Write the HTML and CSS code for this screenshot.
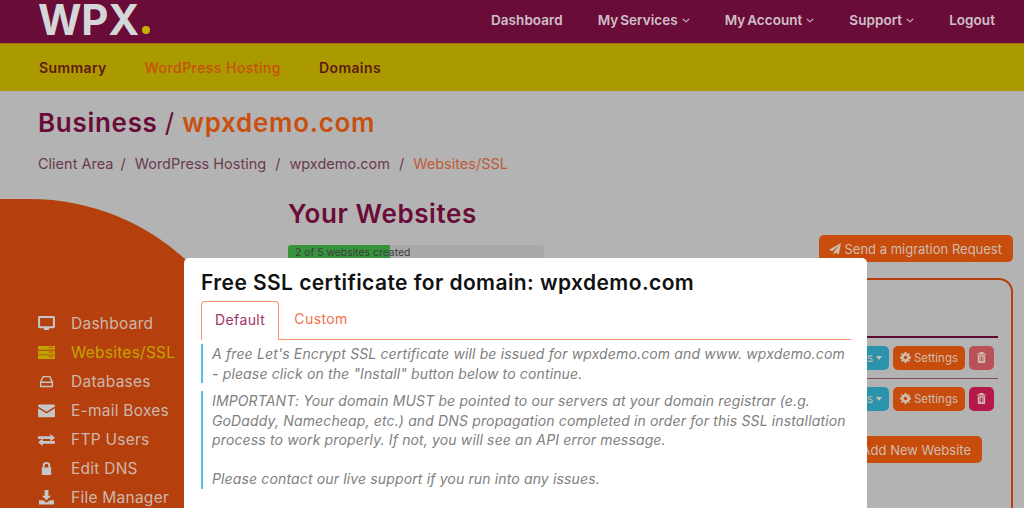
FILE: index.html
```html
<!DOCTYPE html>
<html lang="en">
<head>
    <meta charset="UTF-8">
    <meta name="viewport" content="width=device-width, initial-scale=1.0">
    <title>WPX - Websites/SSL</title>
    <link rel="stylesheet" href="styles.css">
</head>
<body>
<div class="page">
    <header class="topbar">
        <a class="logo" href="#">WPX<span class="logo-dot"></span></a>
        <nav class="topnav">
            <a href="#">Dashboard</a>
            <a href="#">My Services <svg class="chev" viewBox="0 0 10 6"><path d="M1 1l4 3.6L9 1"/></svg></a>
            <a href="#">My Account <svg class="chev" viewBox="0 0 10 6"><path d="M1 1l4 3.6L9 1"/></svg></a>
            <a href="#">Support <svg class="chev" viewBox="0 0 10 6"><path d="M1 1l4 3.6L9 1"/></svg></a>
            <a href="#">Logout</a>
        </nav>
    </header>

    <nav class="subnav">
        <a href="#">Summary</a>
        <a href="#" class="active">WordPress Hosting</a>
        <a href="#">Domains</a>
    </nav>

    <section class="page-head">
        <h1>Business <span class="slash">/</span> <span class="domain">wpxdemo.com</span></h1>
        <ol class="crumbs">
            <li>Client Area</li>
            <li class="sep">/</li>
            <li>WordPress Hosting</li>
            <li class="sep">/</li>
            <li>wpxdemo.com</li>
            <li class="sep">/</li>
            <li class="current">Websites/SSL</li>
        </ol>
    </section>

    <div class="layout">
        <aside class="sidebar">
            <ul>
                <li>
                    <svg viewBox="0 0 18 16"><path d="M1.5 0h15A1.5 1.5 0 0 1 18 1.500v10a1.500 1.500 0 0 1-1.500 1.500H11.500l.5 2H6l.5-2H1.500A1.500 1.500 0 0 1 0 11.500v-10A1.500 1.500 0 0 1 1.500 0zM2.200 2.200v8.600h13.600V2.200z" fill-rule="evenodd"/></svg>
                    Dashboard
                </li>
                <li class="active">
                    <svg viewBox="0 0 18 16"><path d="M0 1h18v4H0zM0 6h18v4H0zM0 11h18v4H0z"/><path class="cut" d="M11 2.500h5M11 7.500h5M11 12.500h5"/></svg>
                    Websites/SSL
                </li>
                <li>
                    <svg viewBox="0 0 18 16"><path d="M5 2h8l3 6.500V14H2V8.500zM6 3.500L3.800 8h10.400L12 3.500zM3.500 9.500v3h11v-3z" fill-rule="evenodd"/></svg>
                    Databases
                </li>
                <li>
                    <svg viewBox="0 0 18 16"><path d="M1.500 1.500h15c.8 0 1.500.7 1.500 1.500v.6L9 9.200 0 3.600V3c0-.8.7-1.500 1.500-1.500zM0 5.700l9 5.600 9-5.600v8.100c0 .8-.7 1.500-1.500 1.500h-15c-.8 0-1.500-.7-1.500-1.500z"/></svg>
                    E-mail Boxes
                </li>
                <li>
                    <svg viewBox="0 0 18 16"><path d="M0 4h13V1.500L18 5.500l-5 4V7H0zM18 9H5V6.500L0 10.500l5 4V12h13z" transform="translate(0 .5)"/></svg>
                    FTP Users
                </li>
                <li>
                    <svg viewBox="0 0 18 16"><path d="M5 7V5a4 4 0 0 1 8 0v2h1v8H4V7zM7 7h4V5a2 2 0 0 0-4 0z" fill-rule="evenodd"/></svg>
                    Edit DNS
                </li>
                <li>
                    <svg viewBox="0 0 18 16"><path d="M7 0h4v6h3l-5 5-5-5h3zM1 11h4.500L9 13.500 12.500 11H17v4.500H1z"/></svg>
                    File Manager
                </li>
            </ul>
        </aside>

        <main class="content">
            <h2>Your Websites</h2>
            <div class="quota-row">
                <div class="progress">
                    <div class="progress-bar" style="width: 40%"></div>
                    <span class="progress-label">2 of 5 websites created</span>
                </div>
                <a href="#" class="btn btn-migrate">
                    <svg class="ico" viewBox="0 0 14 14"><path d="M14 0L11.500 13 7.600 11.200 5.500 14V10.800L11.500 3 3.800 9.700 0 8z"/></svg>
                    Send a migration Request
                </a>
            </div>

            <div class="sites-box">
                <div class="site-row first">
                    <a href="#" class="btn btn-teal">Actions <span class="caret"></span></a>
                    <a href="#" class="btn">
                        <svg class="ico" viewBox="0 0 12 12"><use href="#cog"/></svg>
                        Settings
                    </a>
                    <a href="#" class="btn btn-del faded"><svg class="ico" viewBox="0 0 12 12"><use href="#trash"/></svg></a>
                </div>
                <div class="site-row">
                    <a href="#" class="btn btn-teal">Actions <span class="caret"></span></a>
                    <a href="#" class="btn">
                        <svg class="ico" viewBox="0 0 12 12"><use href="#cog"/></svg>
                        Settings
                    </a>
                    <a href="#" class="btn btn-del"><svg class="ico" viewBox="0 0 12 12"><use href="#trash"/></svg></a>
                </div>
                <div class="box-foot">
                    <a href="#" class="btn btn-add">Add New Website</a>
                </div>
            </div>
        </main>
    </div>

    <div class="modal">
        <h3>Free SSL certificate for domain: wpxdemo.com</h3>
        <div class="tabs">
            <a href="#" class="tab active">Default</a>
            <a href="#" class="tab">Custom</a>
        </div>
        <blockquote>
            A free Let's Encrypt SSL certificate will be issued for wpxdemo.com and www. wpxdemo.com<br>
            - please click on the "Install" button below to continue.
        </blockquote>
        <blockquote>
            IMPORTANT: Your domain MUST be pointed to our servers at your domain registrar (e.g.<br>
            GoDaddy, Namecheap, etc.) and DNS propagation completed in order for this SSL installation<br>
            process to work properly. If not, you will see an API error message.<br>
            <br>
            Please contact our live support if you run into any issues.
        </blockquote>
    </div>

    <svg class="defs" width="0" height="0">
        <symbol id="cog" viewBox="0 0 12 12">
            <path fill-rule="evenodd" d="M5 0h2l.3 1.600 1.100.5L9.800 1.200l1 1-.9 1.400.5 1.100L12 5v2l-1.600.3-.5 1.100.9 1.400-1 1-1.400-.9-1.100.5L7 12H5l-.3-1.600-1.100-.5-1.400.9-1-1 .9-1.400-.5-1.100L0 7V5l1.600-.3.5-1.100-.9-1.400 1-1 1.400.9 1.100-.5zM6 4a2 2 0 1 0 0 4 2 2 0 0 0 0-4z"/>
        </symbol>
        <symbol id="trash" viewBox="0 0 12 12">
            <path fill-rule="evenodd" d="M4 0h4l.6 1.500H11v1.200H1V1.500h2.400zM2 3.500h8V11a1 1 0 0 1-1 1H3a1 1 0 0 1-1-1zM4 5v5h.9V5zM5.600 5v5h.9V5zM7.200 5v5h.9V5z"/>
        </symbol>
    </svg>
</div>
</body>
</html>
```

FILE: styles.css
```css
html, body {
    margin: 0;
    padding: 0;
    height: 100%;
}

body {
    font-family: Inter, "Open Sans", sans-serif;
    background-color: #b3b3b3;
    overflow: hidden;
}

a {
    color: inherit;
    text-decoration: none;
}

.page {
    position: relative;
    height: 100vh;
    overflow: hidden;
}

.defs {
    position: absolute;
}

/* top bar */
.topbar {
    display: flex;
    justify-content: space-between;
    align-items: center;
    height: 43px;
    padding: 0 29px 0 38px;
    background-color: #6a0c38;
    border-bottom: 1px solid #a8701c;
    box-sizing: content-box;
}

.logo {
    display: flex;
    align-items: flex-end;
    height: 43px;
    padding-bottom: 4px;
    box-sizing: border-box;
    color: #d5d6d8;
    font-size: 42px;
    font-weight: 700;
    line-height: 38px;
    letter-spacing: -0.3px;
}

.logo-dot {
    width: 8px;
    height: 8px;
    margin: 0 0 5px 3px;
    border-radius: 50%;
    background-color: #c9b000;
}

.topnav {
    display: flex;
    gap: 35px;
    margin-top: -3px;
    color: #cfc0c8;
    font-size: 13.500px;
    font-weight: 600;
    letter-spacing: 0.05px;
    word-spacing: -1.500px;
}

.chev {
    width: 8px;
    height: 5px;
    margin-left: 2px;
    vertical-align: 2px;
    fill: none;
    stroke: #cfc0c8;
    stroke-width: 1.300;
}

/* yellow bar */
.subnav {
    display: flex;
    gap: 38px;
    align-items: center;
    height: 47px;
    padding-left: 39px;
    background-color: #ab9900;
    color: #5e1a12;
    font-size: 14px;
    font-weight: 600;
    letter-spacing: 0.4px;
}

.subnav .active {
    color: #c8500f;
    font-weight: 500;
    letter-spacing: 0.45px;
}

/* page title */
.page-head {
    height: 108px;
    padding: 17px 38px 0;
    box-sizing: border-box;
}

.page-head h1 {
    margin: 0;
    color: #6a0c38;
    font-size: 26px;
    font-weight: 600;
    line-height: 30px;
    letter-spacing: 0.7px;
}

.slash {
    font-weight: 400;
}

.domain {
    color: #c8500f;
}

.crumbs {
    display: flex;
    gap: 9px;
    margin: 16px 0 0;
    padding: 0;
    list-style: none;
    color: #6b3a50;
    font-size: 14.500px;
    line-height: 20px;
}

.crumbs li:first-child {
    margin-right: -2px;
}

.crumbs .current {
    color: #bf5b36;
}

/* sidebar + content */
.layout {
    display: grid;
    grid-template-columns: 288px 1fr;
    min-height: 400px;
}

.sidebar {
    width: 260px;
    padding-top: 110px;
    background-color: #b5400e;
    border-top-right-radius: 230px;
    color: #cdb7ab;
}

.sidebar ul {
    margin: 0;
    padding: 0 0 0 38px;
    list-style: none;
}

.sidebar li {
    display: flex;
    align-items: center;
    gap: 16px;
    height: 29px;
    font-size: 15.500px;
    letter-spacing: 0.25px;
    white-space: nowrap;
}

.sidebar svg {
    flex: none;
    width: 17px;
    height: 15px;
    fill: #c6c6c8;
}

.sidebar .active {
    color: #c2a400;
}

.sidebar .active svg {
    fill: #c2a400;
}

.sidebar .cut {
    fill: none;
    stroke: #b5400e;
    stroke-width: 0.800;
}

.content {
    padding-right: 11px;
}

.content h2 {
    margin: 1px 0 0;
    color: #6a0c38;
    font-size: 26px;
    font-weight: 600;
    line-height: 28px;
    letter-spacing: 0.6px;
}

.quota-row {
    display: flex;
    justify-content: space-between;
    align-items: flex-start;
    margin-top: 7px;
}

.progress {
    position: relative;
    width: 256px;
    height: 14px;
    margin-top: 10px;
    background-color: #a9a9a9;
    border-radius: 3px;
}

.progress-bar {
    height: 100%;
    background-color: #37933c;
    border-radius: 3px 0 0 3px;
}

.progress-label {
    position: absolute;
    top: 1px;
    left: 7px;
    color: #3c3c3c;
    font-size: 10.400px;
    line-height: 14px;
}

.btn {
    display: inline-flex;
    align-items: center;
    gap: 3px;
    height: 24px;
    padding: 0 7px;
    background-color: #c84c0c;
    border-radius: 5px;
    box-sizing: border-box;
    color: #cdbdb0;
    font-size: 11.500px;
    white-space: nowrap;
}

.ico {
    width: 11px;
    height: 11px;
    fill: currentColor;
}

.btn-migrate {
    height: 27px;
    padding: 0 11px 0 10px;
    font-size: 13px;
}

.btn-migrate .ico {
    width: 12px;
    height: 12px;
}

.sites-box {
    height: 300px;
    margin-top: 16px;
    padding: 56px 13px 0 0;
    border: 2px solid #b5400e;
    border-radius: 14px;
    box-sizing: border-box;
}

.site-row {
    display: flex;
    justify-content: flex-end;
    align-items: center;
    gap: 4px;
    height: 41px;
    padding: 0 4px 1px 0;
    border-top: 1px solid #7d4a56;
    box-sizing: border-box;
}

.site-row.first {
    height: 42px;
    border-top: 2px solid #5b0a30;
}

.btn-teal {
    background-color: #2b93ab;
}

.caret {
    width: 0;
    height: 0;
    border-left: 3.500px solid transparent;
    border-right: 3.500px solid transparent;
    border-top: 4px solid currentColor;
}

.btn-del {
    width: 25px;
    padding: 0;
    justify-content: center;
    background-color: #b4194a;
}

.btn-del.faded {
    background-color: #bb5158;
}

.box-foot {
    display: flex;
    justify-content: flex-end;
    margin: 17px 16px 0 0;
}

.btn-add {
    height: 27px;
    padding: 0 11px 0 30px;
    font-size: 13px;
}

/* ssl dialog */
.modal {
    position: absolute;
    top: 258px;
    left: 184px;
    width: 683px;
    height: 260px;
    padding: 12px 16px 0 17px;
    background-color: #fff;
    border-radius: 5px;
    box-sizing: border-box;
}

.modal h3 {
    margin: 0;
    color: #111;
    font-size: 21px;
    font-weight: 600;
    line-height: 26px;
    letter-spacing: 0.42px;
}

.tabs {
    display: flex;
    height: 38px;
    margin-top: 5px;
    border-bottom: 1px solid #ff8f68;
}

.tab {
    padding: 0 15px;
    color: #f2714c;
    font-size: 14px;
    line-height: 36px;
    letter-spacing: 0.4px;
}

.tab.active {
    height: 38px;
    padding: 0 13px;
    background-color: #fff;
    border: 1px solid #ff8f68;
    border-bottom: none;
    border-radius: 4px 4px 0 0;
    color: #a23268;
}

.modal blockquote {
    margin: 4px 0 8px;
    padding: 0 0 0 9px;
    border-left: 2px solid #55bfe6;
    color: #808080;
    font-size: 14px;
    font-style: italic;
    line-height: 19.500px;
    letter-spacing: 0.14px;
}
```
